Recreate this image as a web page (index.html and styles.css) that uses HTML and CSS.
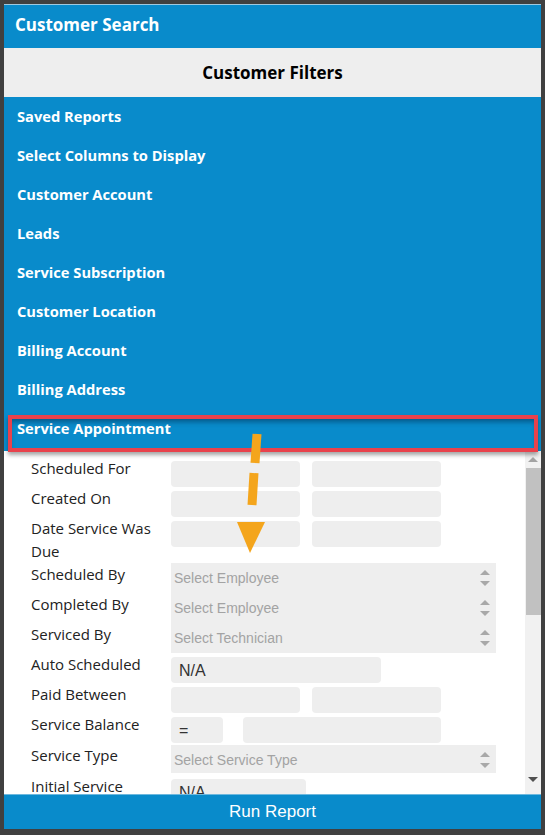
FILE: index.html
```html
<!DOCTYPE html>
<html lang="en">
<head>
  <meta charset="UTF-8" />
  <title>Customer Search</title>
  <link rel="stylesheet" href="styles.css">
</head>
<body>
  <div class="app">
    <div class="title">Customer Search</div>
    <div class="filters-head">Customer Filters</div>

    <ul class="menu">
      <li>Saved Reports</li>
      <li>Select Columns to Display</li>
      <li>Customer Account</li>
      <li>Leads</li>
      <li>Service Subscription</li>
      <li>Customer Location</li>
      <li>Billing Account</li>
      <li>Billing Address</li>
      <li class="highlight">Service Appointment</li>
    </ul>

    <div class="panel">
      <div class="form">
        <div class="row">
          <label>Scheduled For</label>
          <div class="fields"><span class="input date"></span><span class="input date"></span></div>
        </div>
        <div class="row">
          <label>Created On</label>
          <div class="fields"><span class="input date"></span><span class="input date"></span></div>
        </div>
        <div class="row">
          <label>Date Service Was Due</label>
          <div class="fields"><span class="input date"></span><span class="input date"></span></div>
        </div>
        <div class="row">
          <label>Scheduled By</label>
          <div class="fields"><span class="select">Select Employee<i class="spin"></i></span></div>
        </div>
        <div class="row">
          <label>Completed By</label>
          <div class="fields"><span class="select">Select Employee<i class="spin"></i></span></div>
        </div>
        <div class="row">
          <label>Serviced By</label>
          <div class="fields"><span class="select">Select Technician<i class="spin"></i></span></div>
        </div>
        <div class="row">
          <label>Auto Scheduled</label>
          <div class="fields"><span class="input value wide">N/A</span></div>
        </div>
        <div class="row">
          <label>Paid Between</label>
          <div class="fields"><span class="input date"></span><span class="input date"></span></div>
        </div>
        <div class="row">
          <label>Service Balance</label>
          <div class="fields balance"><span class="input value op">=</span><span class="input amount"></span></div>
        </div>
        <div class="row type">
          <label>Service Type</label>
          <div class="fields"><span class="select">Select Service Type<i class="spin"></i></span></div>
        </div>
        <div class="row">
          <label>Initial Service</label>
          <div class="fields"><span class="input value mid">N/A</span></div>
        </div>
      </div>

      <div class="scrollbar">
        <span class="sb-up"></span>
        <span class="sb-thumb"></span>
        <span class="sb-space"></span>
        <span class="sb-down"></span>
      </div>
    </div>

    <button class="run">Run Report</button>

    <!-- annotation arrow -->
    <svg class="arrow" width="40" height="135" viewBox="0 0 40 135">
      <line x1="27" y1="9" x2="25" y2="38" stroke="#f4a51c" stroke-width="9"/>
      <line x1="24" y1="48" x2="22" y2="80" stroke="#f4a51c" stroke-width="9"/>
      <polygon points="7,97 35,97 20,128" fill="#f4a51c"/>
    </svg>
  </div>
</body>
</html>
```

FILE: styles.css
```css
* { margin: 0; padding: 0; box-sizing: border-box; }

html, body {
  height: 100%;
  background: #404040;
  overflow: hidden;
}

body {
  padding: 4px 4px 6px 4px;
  font-family: "Open Sans", "Liberation Sans", sans-serif;
}

.app {
  position: relative;
  height: 100%;
  display: flex;
  flex-direction: column;
  background: #fff;
}

/* top bars */
.title {
  height: 44px;
  line-height: 42px;
  padding-left: 11px;
  background: #098bcb;
  color: #fff;
  font-size: 17px;
  font-weight: 700;
  box-shadow: inset 0 1px 0 #9fc9e0;
}

.filters-head {
  height: 49px;
  line-height: 49px;
  text-align: center;
  background: #eeeeee;
  color: #000;
  font-size: 17px;
  font-weight: 700;
}

.menu {
  list-style: none;
  background: #098bcb;
  padding-bottom: 3px;
}
.menu li {
  height: 39px;
  line-height: 39px;
  padding-left: 13px;
  color: #fff;
  font-size: 14.7px;
  font-weight: 700;
}
.menu li.highlight { position: relative; }
.menu li.highlight::after {
  content: "";
  position: absolute;
  left: 4px;
  right: 3px;
  top: 6px;
  bottom: -4px;
  border: 4px solid #e8424c;
  box-shadow: inset 0 5px 5px -2px rgba(0, 30, 60, 0.45),
              0 3px 4px rgba(0, 0, 0, 0.35);
}

/* filter form */
.panel {
  flex: 1;
  display: flex;
  min-height: 0;
}

.form {
  flex: 1;
  overflow: hidden;
  padding: 6px 0 0 27px;
}

.row {
  display: flex;
  align-items: flex-start;
}
.row label {
  width: 140px;
  flex: none;
  font-size: 15px;
  line-height: 23px;
  color: #222;
  padding-right: 8px;
}
.row.type label { padding-top: 1px; }

.fields {
  display: flex;
  gap: 12px;
}
.fields.balance { gap: 20px; }

.input {
  display: block;
  height: 26px;
  margin: 4px 0 0;
  background: #eeeeee;
  border-radius: 4px;
  font-family: "Liberation Sans", Arial, sans-serif;
}
.input.date { width: 129px; }
.input.wide { width: 210px; }
.input.mid { width: 135px; }
.input.op { width: 52px; padding-left: 10px; }
.input.amount { width: 198px; }
.input.value {
  font-size: 16px;
  line-height: 28px;
  color: #333;
  padding-left: 8px;
}

.select {
  position: relative;
  display: block;
  width: 325px;
  height: 30px;
  line-height: 30px;
  padding-left: 3px;
  background: #eeeeee;
  color: #a3a3a3;
  font-family: "Liberation Sans", Arial, sans-serif;
  font-size: 14px;
}
.row.type .select {
  height: 28px;
  line-height: 30px;
  margin: 2px 0 2px;
}

.spin {
  position: absolute;
  right: 6px;
  top: 7px;
  width: 10px;
  height: 16px;
}
.spin::before,
.spin::after {
  content: "";
  position: absolute;
  left: 0;
  border-left: 5px solid transparent;
  border-right: 5px solid transparent;
}
.spin::before { top: 0; border-bottom: 5px solid #a8a8a8; }
.spin::after { bottom: 0; border-top: 5px solid #a8a8a8; }

/* fake scrollbar */
.scrollbar {
  width: 16px;
  flex: none;
  background: #f1f1f1;
  display: flex;
  flex-direction: column;
  align-items: center;
}
.sb-up,
.sb-down {
  height: 17px;
  width: 16px;
  position: relative;
  flex: none;
}
.sb-up::after,
.sb-down::after {
  content: "";
  position: absolute;
  left: 3px;
  top: 6px;
  border-left: 5px solid transparent;
  border-right: 5px solid transparent;
}
.sb-up::after { border-bottom: 5px solid #a3a3a3; }
.sb-down::after { border-top: 5px solid #505050; }
.sb-down { margin-bottom: 6px; }
.sb-thumb {
  width: 15px;
  height: 147px;
  background: #c1c1c1;
  flex: none;
}
.sb-space { flex: 1; }

/* bottom button */
.run {
  height: 35px;
  border: 0;
  border-top: 1px solid #6db8de;
  background: #098bcb;
  color: #fff;
  font-family: "Liberation Sans", Arial, sans-serif;
  font-size: 17px;
}

.arrow {
  position: absolute;
  left: 226px;
  top: 421px;
  pointer-events: none;
}
```
